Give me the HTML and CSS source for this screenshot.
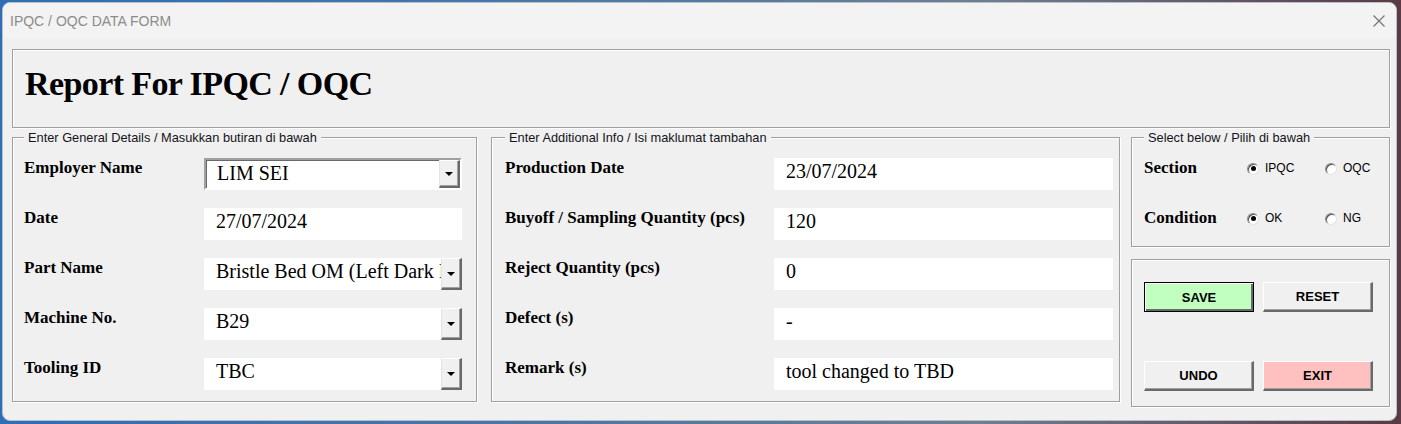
FILE: index.html
```html
<!DOCTYPE html>
<html>
<head>
<meta charset="utf-8">
<title>IPQC / OQC DATA FORM</title>
<link rel="stylesheet" href="styles.css">
</head>
<body>
<div class="window">
  <div class="titlebar">
    <span class="title">IPQC / OQC DATA FORM</span>
    <svg class="close" width="12" height="12" viewBox="0 0 12 12"><path d="M0.5 0.5 L11.5 11.5 M11.5 0.5 L0.5 11.5" stroke="#707070" stroke-width="1.1" fill="none"/></svg>
  </div>
  <div class="client">
    <div class="header"><h1>Report For IPQC / OQC</h1></div>
    <div class="frames">
      <fieldset class="frame general">
        <legend>Enter General Details / Masukkan butiran di bawah</legend>
        <div class="rows">
          <div class="row"><span class="label">Employer Name</span>
            <div class="combo sunken"><span class="value">LIM SEI</span><span class="drop"></span></div></div>
          <div class="row"><span class="label">Date</span>
            <div class="field">27/07/2024</div></div>
          <div class="row"><span class="label">Part Name</span>
            <div class="combo"><span class="value">Bristle Bed OM (Left Dark I</span><span class="drop"></span></div></div>
          <div class="row"><span class="label">Machine No.</span>
            <div class="combo"><span class="value">B29</span><span class="drop"></span></div></div>
          <div class="row"><span class="label">Tooling ID</span>
            <div class="combo"><span class="value">TBC</span><span class="drop"></span></div></div>
        </div>
      </fieldset>
      <fieldset class="frame additional">
        <legend>Enter Additional Info / Isi maklumat tambahan</legend>
        <div class="rows">
          <div class="row"><span class="label">Production Date</span><div class="field">23/07/2024</div></div>
          <div class="row"><span class="label">Buyoff / Sampling Quantity (pcs)</span><div class="field">120</div></div>
          <div class="row"><span class="label">Reject Quantity (pcs)</span><div class="field">0</div></div>
          <div class="row"><span class="label">Defect (s)</span><div class="field">-</div></div>
          <div class="row"><span class="label">Remark (s)</span><div class="field">tool changed to TBD</div></div>
        </div>
      </fieldset>
      <div class="side">
        <fieldset class="frame select">
          <legend>Select below / Pilih di bawah</legend>
          <div class="rows">
            <div class="row">
              <span class="label">Section</span>
              <span class="radio"><span class="circle on"></span><span class="txt">IPQC</span></span>
              <span class="radio"><span class="circle"></span><span class="txt">OQC</span></span>
            </div>
            <div class="row">
              <span class="label">Condition</span>
              <span class="radio"><span class="circle on"></span><span class="txt">OK</span></span>
              <span class="radio"><span class="circle"></span><span class="txt">NG</span></span>
            </div>
          </div>
        </fieldset>
        <div class="actions">
          <button class="btn save">SAVE</button>
          <button class="btn">RESET</button>
          <button class="btn">UNDO</button>
          <button class="btn exit">EXIT</button>
        </div>
      </div>
    </div>
  </div>
</div>
</body>
</html>
```

FILE: styles.css
```css
* { box-sizing: border-box; }
html, body { margin: 0; }
body {
  width: 1401px;
  height: 424px;
  overflow: hidden;
  padding: 2px 0 0 2px;
  background: linear-gradient(90deg, #2f6db6 0%, #4a78a6 40%, #6d7f93 70%, #5a3a44 100%);
}
.window {
  width: 1395px;
  height: 419px;
  background: #f0f0f0;
  border: 1px solid #b9c0c8;
  border-radius: 8px;
  overflow: hidden;
  display: flex;
  flex-direction: column;
}
.titlebar {
  height: 35px;
  background: #f3f3f3;
  display: flex;
  align-items: flex-start;
  justify-content: space-between;
  padding: 0 11px 0 7px;
  flex: none;
}
.title {
  margin-top: 10px;
  font: 14px/16px "Liberation Sans", Arial, sans-serif;
  color: #8c8c8c;
}
.close { margin-top: 12px; display: block; }
.client {
  flex: 1;
  padding: 11px 0 0 9px;
}
.header {
  width: 1378px;
  height: 79px;
  border: 1px solid #a0a0a0;
  box-shadow: inset 1px 1px 0 #fff, 1px 1px 0 #fff;
  display: flex;
  align-items: center;
  padding: 0 0 10px 12px;
}
.header h1 {
  margin: 0;
  font: bold 34px/39px "Liberation Serif", "Times New Roman", serif;
  letter-spacing: -0.6px;
  color: #000;
}
.frames {
  display: flex;
  align-items: flex-start;
  margin-top: 2px;
}
.frame {
  margin: 0;
  min-width: 0;
  border: 1px solid #a0a0a0;
  box-shadow: inset 1px 1px 0 #fff, 1px 1px 0 #fff;
  padding: 13px 14px 11px 11px;
}
.frame legend {
  padding: 0 4px;
  font: 12.8px/15px "Liberation Sans", Arial, sans-serif;
  color: #141420;
  background: #f0f0f0;
}
.general { width: 465px; }
.additional { width: 629px; margin-left: 14px; padding-left: 13px; padding-right: 6px; }
.side { width: 259px; margin-left: 11px; display: flex; flex-direction: column; gap: 12px; }
.select { width: 259px; padding: 13px 6px 6px 12px; }
.rows { display: flex; flex-direction: column; gap: 18px; }
.row {
  display: grid;
  height: 32px;
  align-items: start;
}
.general .row { grid-template-columns: 180px 1fr; }
.additional .row { grid-template-columns: 269px 1fr; }
.select .row { grid-template-columns: 103px 78px 1fr; }
.label {
  font: bold 17px/19px "Liberation Serif", "Times New Roman", serif;
  color: #000;
  white-space: nowrap;
}
.field, .combo {
  height: 32px;
  background: #fff;
  font: 20px/23px "Liberation Serif", "Times New Roman", serif;
  color: #000;
  white-space: nowrap;
  overflow: hidden;
}
.field { padding: 2px 0 0 12px; }
.combo { display: flex; }
.combo .value {
  flex: 1;
  min-width: 0;
  overflow: hidden;
  padding: 2px 0 0 12px;
}
.combo.sunken {
  border: 2px solid;
  border-color: #a0a0a0 #fff #fff #a0a0a0;
  box-shadow: inset 1px 1px 0 #696969;
}
.combo.sunken .value { padding: 2px 0 0 11px; }
.drop {
  flex: none;
  width: 21px;
  height: 100%;
  background: #f0f0f0;
  border-top: 1px solid #fff;
  border-left: 1px solid #e3e3e3;
  border-right: 2px solid #696969;
  border-bottom: 2px solid #696969;
  box-shadow: inset -1px -1px 0 #a0a0a0;
  display: flex;
  align-items: center;
  justify-content: center;
}
.drop::after {
  content: "";
  border-left: 4px solid transparent;
  border-right: 4px solid transparent;
  border-top: 4px solid #000;
  margin-left: -1px;
}
.radio {
  display: flex;
  align-items: center;
  height: 21px;
  gap: 6px;
  font: 12px/13px "Liberation Sans", Arial, sans-serif;
  color: #000;
}
.circle {
  width: 12px;
  height: 12px;
  border-radius: 50%;
  background: #fff;
  border: 1px solid;
  border-color: #8a8a8a #e3e3e3 #e3e3e3 #8a8a8a;
  box-shadow: inset 1px 1px 0 #505050;
  display: flex;
  align-items: center;
  justify-content: center;
}
.circle.on::after {
  content: "";
  width: 5px;
  height: 5px;
  border-radius: 50%;
  background: #000;
}
.actions {
  height: 148px;
  border: 1px solid #a0a0a0;
  box-shadow: inset 1px 1px 0 #fff, 1px 1px 0 #fff;
  padding: 22px 0 0 12px;
  display: grid;
  grid-template-columns: 110px 110px;
  grid-template-rows: 30px 30px;
  column-gap: 9px;
  row-gap: 49px;
  align-content: start;
}
.btn {
  margin: 0;
  padding: 0;
  width: 110px;
  height: 30px;
  background: #f0f0f0;
  border-style: solid;
  border-width: 1px 2px 2px 1px;
  border-color: #fff #696969 #696969 #fff;
  box-shadow: inset -1px -1px 0 #a0a0a0;
  font: bold 13px "Liberation Sans", Arial, sans-serif;
  color: #000;
}
.btn.save {
  background: #c0ffc0;
  border: 1px solid #000;
  box-shadow: inset 1px 1px 0 #fff, inset -2px -2px 0 #696969;
}
.btn.exit { background: #ffc0c0; }
```
